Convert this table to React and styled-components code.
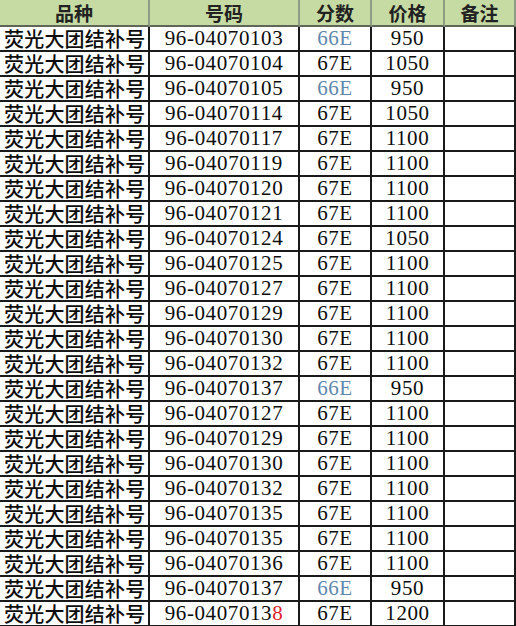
import React from "react";
import styled, { createGlobalStyle } from "styled-components";

const Global = createGlobalStyle`
  html, body { margin: 0; padding: 0; background: #ffffff; overflow: hidden; }
  #root { width: 516px; }
`;

const Table = styled.div`
  display: grid;
  grid-template-columns: 150px 150px 72px 73px 71px;
  width: 516px;
`;

const HeadCell = styled.div`
  height: 25px;
  background: #c6dba3;
  border-right: 2px solid #8f9c84;
  border-bottom: 2px solid #5f6658;
  display: flex;
  align-items: center;
  justify-content: center;
  font-family: "Noto Sans CJK SC", sans-serif;
  font-size: 19px;
  font-weight: 700;
  color: #222222;
  line-height: 1;
  box-sizing: content-box;
  &:last-child { border-right-color: #b9c9a3; }
`;

const Cell = styled.div`
  height: 23px;
  border-right: 2px solid #1a1a1a;
  border-bottom: 2px solid #1a1a1a;
  display: flex;
  align-items: center;
  justify-content: ${(p) => (p.$left ? "flex-start" : "center")};
  padding-left: ${(p) => (p.$left ? "4px" : "0")};
  font-family: ${(p) =>
    p.$cjk ? '"Noto Sans CJK SC", sans-serif' : '"Liberation Serif", serif'};
  font-size: ${(p) => (p.$cjk ? "20px" : "21px")};
  font-weight: ${(p) => (p.$cjk ? 500 : 400)};
  letter-spacing: ${(p) => (p.$cjk ? "0.2px" : "0.6px")};
  color: ${(p) => (p.$blue ? "#5f87ad" : "#0d0d0d")};
  line-height: 1;
  white-space: nowrap;
  box-sizing: content-box;
`;

const Red = styled.span`
  color: #e0242e;
`;

const rows = [
  ["96-04070103", "66E", "950"],
  ["96-04070104", "67E", "1050"],
  ["96-04070105", "66E", "950"],
  ["96-04070114", "67E", "1050"],
  ["96-04070117", "67E", "1100"],
  ["96-04070119", "67E", "1100"],
  ["96-04070120", "67E", "1100"],
  ["96-04070121", "67E", "1100"],
  ["96-04070124", "67E", "1050"],
  ["96-04070125", "67E", "1100"],
  ["96-04070127", "67E", "1100"],
  ["96-04070129", "67E", "1100"],
  ["96-04070130", "67E", "1100"],
  ["96-04070132", "67E", "1100"],
  ["96-04070137", "66E", "950"],
  ["96-04070127", "67E", "1100"],
  ["96-04070129", "67E", "1100"],
  ["96-04070130", "67E", "1100"],
  ["96-04070132", "67E", "1100"],
  ["96-04070135", "67E", "1100"],
  ["96-04070135", "67E", "1100"],
  ["96-04070136", "67E", "1100"],
  ["96-04070137", "66E", "950"],
  ["96-04070138", "67E", "1200", true],
];

export default function App() {
  return (
    <>
      <Global />
      <Table>
        <HeadCell>品种</HeadCell>
        <HeadCell>号码</HeadCell>
        <HeadCell>分数</HeadCell>
        <HeadCell>价格</HeadCell>
        <HeadCell>备注</HeadCell>
        {rows.map(([code, grade, price, red], i) => (
          <React.Fragment key={i}>
            <Cell $cjk $left>荧光大团结补号</Cell>
            <Cell>
              {red ? (
                <>
                  {code.slice(0, -1)}
                  <Red>{code.slice(-1)}</Red>
                </>
              ) : (
                code
              )}
            </Cell>
            <Cell $blue={grade === "66E"}>{grade}</Cell>
            <Cell>{price}</Cell>
            <Cell />
          </React.Fragment>
        ))}
      </Table>
    </>
  );
}
